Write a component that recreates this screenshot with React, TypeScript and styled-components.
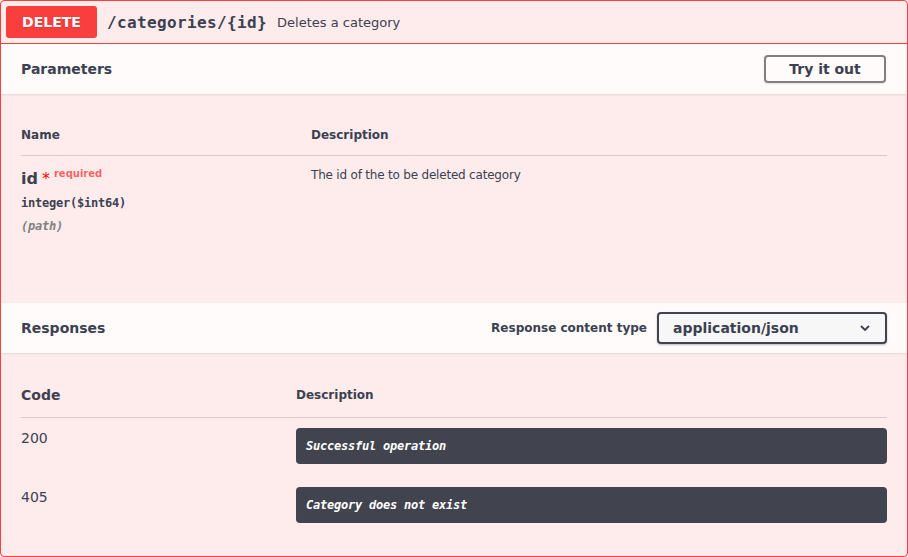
import React from "react";
import styled, { createGlobalStyle } from "styled-components";

const Global = createGlobalStyle`
  html, body { margin: 0; padding: 0; background: #fff; }
  body { font-family: "DejaVu Sans", sans-serif; color: #3b4151; }
  * { box-sizing: border-box; }
`;

const Block = styled.div`
  border: 1px solid #f93e3e;
  border-radius: 4px;
  background: #feecec;
  width: 908px;
  height: 557px;
  overflow: hidden;
`;

const Summary = styled.div`
  display: flex;
  align-items: center;
  padding: 5px;
  border-bottom: 1px solid #f93e3e;
  height: 43px;
`;

const Method = styled.span`
  display: inline-block;
  background: #f93e3e;
  color: #fff;
  font-size: 14px;
  font-weight: 700;
  line-height: 20px;
  padding: 6px 0;
  width: 91px;
  text-align: center;
  border-radius: 3px;
  text-shadow: 0 1px 0 rgba(0, 0, 0, 0.1);
`;

const Path = styled.span`
  font-family: "DejaVu Sans Mono", monospace;
  font-size: 16px;
  font-weight: 700;
  letter-spacing: 0.37px;
  padding: 0 10px;
  color: #3b4151;
`;

const SummaryDesc = styled.span`
  font-size: 13px;
  color: #3b4151;
`;

const SectionHeader = styled.div`
  display: flex;
  align-items: center;
  justify-content: space-between;
  height: 50px;
  padding: 8px 20px;
  background: rgba(255, 255, 255, 0.8);
  box-shadow: 0 1px 2px rgba(0, 0, 0, 0.1);
  position: relative;
`;

const SectionTitle = styled.h4`
  margin: 0;
  font-size: 14px;
  font-weight: 700;
  color: #3b4151;
`;

const TryButton = styled.button`
  font-family: "DejaVu Sans", sans-serif;
  font-size: 14px;
  font-weight: 700;
  color: #3b4151;
  background: transparent;
  border: 2px solid #808080;
  border-radius: 4px;
  padding: 4px 0;
  line-height: 16px;
  height: 28px;
  width: 122px;
  margin-right: 1px;
  box-shadow: 0 1px 2px rgba(0, 0, 0, 0.1);
`;

const TableBox = styled.div<{ $pt: number; $pb: number }>`
  padding: ${(p) => p.$pt}px 20px ${(p) => p.$pb}px;
`;

const HeadRow = styled.div<{ $cols: string; $pt: number }>`
  display: grid;
  grid-template-columns: ${(p) => p.$cols};
  align-items: center;
  padding: ${(p) => p.$pt}px 0 12px;
  border-bottom: 1px solid rgba(59, 65, 81, 0.2);
`;

const HeadCell = styled.div<{ $size: number }>`
  font-size: ${(p) => p.$size}px;
  font-weight: 700;
  line-height: ${(p) => (p.$size > 12 ? 20 : 16)}px;
  color: #3b4151;
`;

const BodyRow = styled.div<{ $cols: string; $minH?: number }>`
  display: grid;
  grid-template-columns: ${(p) => p.$cols};
  padding-top: 10px;
  min-height: ${(p) => p.$minH ?? 0}px;
`;

const ParamName = styled.div`
  font-size: 16px;
  font-weight: 700;
  line-height: 24px;
  margin-top: 1px;
  color: #3b4151;
`;

const Star = styled.span`
  color: red;
  margin-left: 4px;
  font-weight: 400;
`;

const Required = styled.span`
  font-size: 10px;
  font-weight: 700;
  color: rgba(255, 0, 0, 0.6);
  position: relative;
  top: -7px;
  padding: 0 4px;
`;

const ParamType = styled.div`
  font-family: "DejaVu Sans Mono", monospace;
  font-size: 12px;
  font-weight: 700;
  letter-spacing: -0.22px;
  line-height: 14px;
  padding: 3px 0 4px;
  color: #3b4151;
`;

const ParamIn = styled.div`
  font-family: "DejaVu Sans Mono", monospace;
  font-size: 12px;
  font-weight: 700;
  font-style: italic;
  letter-spacing: -0.22px;
  line-height: 14px;
  padding: 5px 0;
  color: #808080;
`;

const ParamDesc = styled.div`
  font-size: 12px;
  letter-spacing: -0.2px;
  line-height: 16px;
  padding-top: 1px;
  color: #3b4151;
`;

const ContentType = styled.div`
  display: flex;
  align-items: center;
  gap: 10px;
`;

const ContentLabel = styled.label`
  font-size: 12px;
  font-weight: 700;
  color: #3b4151;
`;

const Select = styled.div`
  position: relative;
  width: 230px;
  height: 32px;
  border: 2px solid #41444e;
  border-radius: 4px;
  background: #f7f7f7;
  box-shadow: 0 1px 2px rgba(0, 0, 0, 0.25);
  font-size: 14px;
  font-weight: 700;
  line-height: 28px;
  padding: 0 40px 0 14px;
  color: #3b4151;
`;

const Chevron = styled.svg`
  position: absolute;
  right: 15px;
  top: 11px;
`;

const Code = styled.div`
  font-size: 14px;
  line-height: 20px;
  color: #3b4151;
`;

const Markdown = styled.div`
  background: #41444e;
  border-radius: 4px;
  color: #fff;
  font-family: "DejaVu Sans Mono", monospace;
  font-size: 12px;
  font-style: italic;
  font-weight: 700;
  letter-spacing: -0.22px;
  line-height: 16px;
  padding: 10px;
  margin-bottom: 13px;
`;

const responses = [
  { code: "200", desc: "Successful operation" },
  { code: "405", desc: "Category does not exist" },
];

export default function App() {
  return (
    <>
      <Global />
      <Block>
        <Summary>
          <Method>DELETE</Method>
          <Path>/categories/{"{id}"}</Path>
          <SummaryDesc>Deletes a category</SummaryDesc>
        </Summary>

        <SectionHeader>
          <SectionTitle>Parameters</SectionTitle>
          <TryButton>Try it out</TryButton>
        </SectionHeader>

        <TableBox $pt={21} $pb={20}>
          <HeadRow $cols="290px 1fr" $pt={12}>
            <HeadCell $size={12}>Name</HeadCell>
            <HeadCell $size={12}>Description</HeadCell>
          </HeadRow>
          <BodyRow $cols="290px 1fr" $minH={127}>
            <div>
              <ParamName>
                id<Star>*</Star>
                <Required>required</Required>
              </ParamName>
              <ParamType>integer($int64)</ParamType>
              <ParamIn>(path)</ParamIn>
            </div>
            <ParamDesc>The id of the to be deleted category</ParamDesc>
          </BodyRow>
        </TableBox>

        <SectionHeader>
          <SectionTitle>Responses</SectionTitle>
          <ContentType>
            <ContentLabel>Response content type</ContentLabel>
            <Select>
              application/json
              <Chevron width="10" height="6" viewBox="0 0 10 6">
                <path d="M1 1 L5 5 L9 1" fill="none" stroke="#3b4151" strokeWidth="1.8" />
              </Chevron>
            </Select>
          </ContentType>
        </SectionHeader>

        <TableBox $pt={20} $pb={20}>
          <HeadRow $cols="275px 1fr" $pt={12}>
            <HeadCell $size={14}>Code</HeadCell>
            <HeadCell $size={12}>Description</HeadCell>
          </HeadRow>
          {responses.map((r) => (
            <BodyRow key={r.code} $cols="275px 1fr">
              <Code>{r.code}</Code>
              <Markdown>{r.desc}</Markdown>
            </BodyRow>
          ))}
        </TableBox>
      </Block>
    </>
  );
}
